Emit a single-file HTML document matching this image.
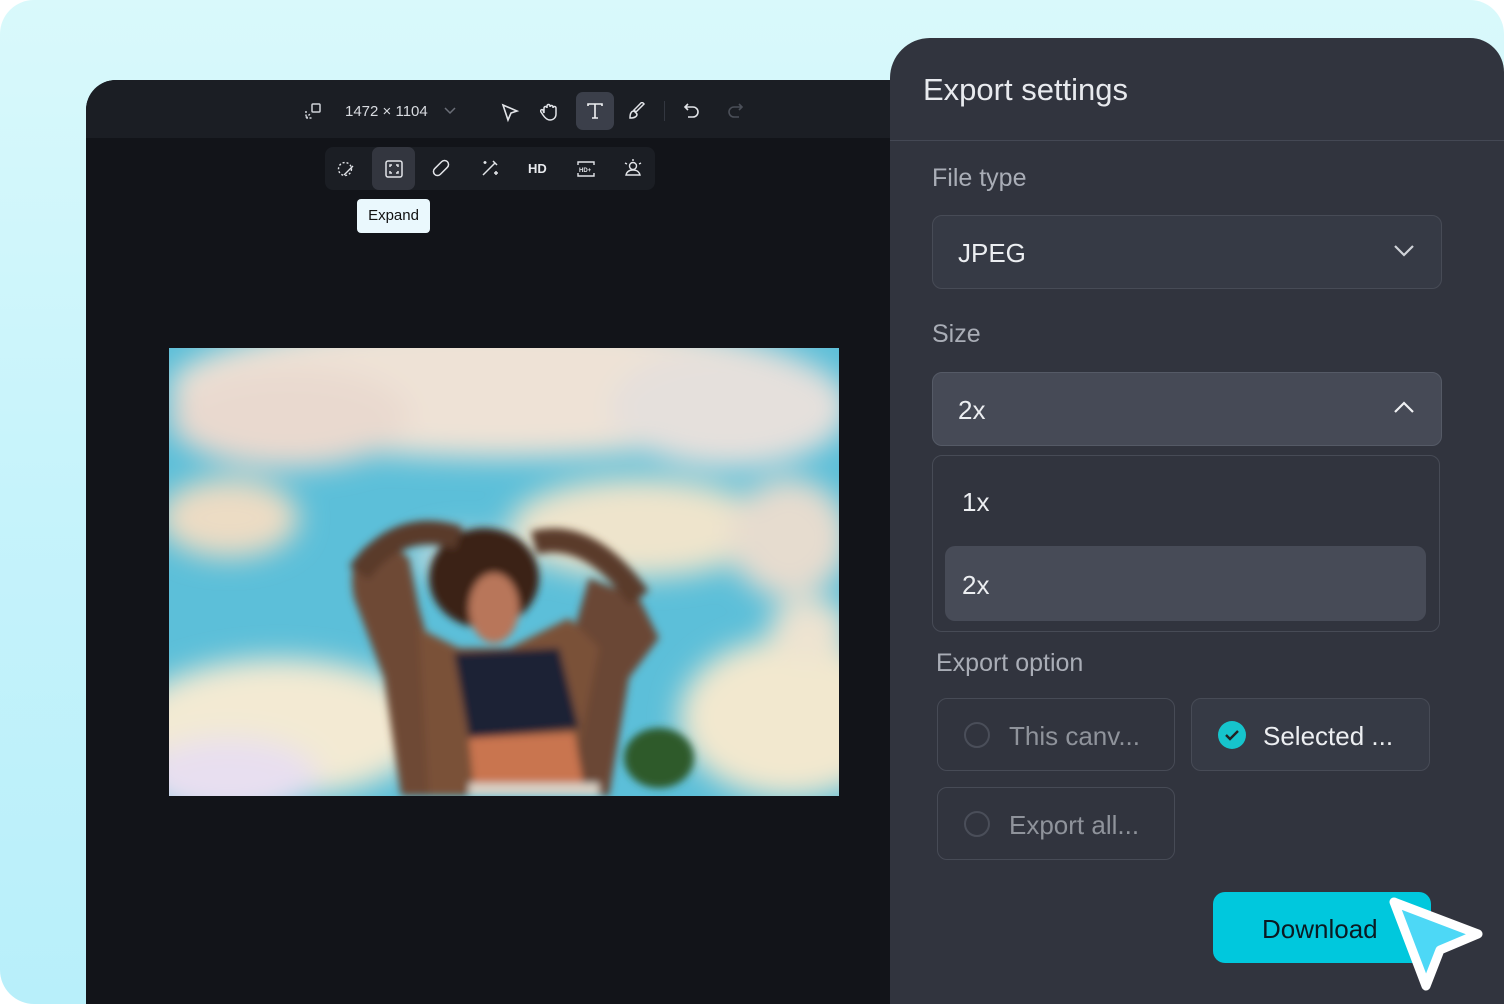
<!DOCTYPE html>
<html><head><meta charset="utf-8"><style>
*{margin:0;padding:0;box-sizing:border-box}
body{width:1504px;height:1004px;background:#fff;font-family:"Liberation Sans",sans-serif;overflow:hidden;position:relative}
.bg{position:absolute;inset:0;border-radius:34px;background:linear-gradient(180deg,#d9f9fb 0%,#c6f3fb 50%,#b8effa 100%)}
.ed{position:absolute;left:86px;top:80px;width:860px;height:924px;background:#121419;border-top-left-radius:30px}
.tb{position:absolute;left:86px;top:80px;width:860px;height:58px;background:#1b1e24;border-top-left-radius:30px}
.t{position:absolute;color:#d8dbe0;font-size:15px}
.sub{position:absolute;left:325px;top:147px;width:330px;height:43px;background:#1b1e24;border-radius:8px}
.act{position:absolute;background:#3b3f4a;border-radius:7px}
.tip{position:absolute;left:357px;top:199px;width:73px;height:34px;background:#eaf8fd;border-radius:4px;color:#111;font-size:15px;text-align:center;line-height:34px}
.img{position:absolute;left:169px;top:348px;width:670px;height:448px;overflow:hidden;background:#5cbfd9}
.pn{position:absolute;left:890px;top:38px;width:614px;height:966px;background:#31343e;border-top-left-radius:40px;border-top-right-radius:34px}
.h{position:absolute;color:#e8eaee;font-size:31px;left:923px;top:72px}
.hr{position:absolute;left:890px;top:140px;width:614px;height:1px;background:#444854}
.lb{position:absolute;color:#a9adb6;font-size:25px}
.box{position:absolute;border:1px solid #474b56;border-radius:10px;background:#363a45}
.v{position:absolute;color:#eceef1;font-size:26px}
.rad{position:absolute;width:26px;height:26px;border-radius:50%;border:2px solid #4a4e59}
</style></head><body>
<div class="bg"></div>
<div class="ed"></div>
<div class="tb"></div>
<svg style="position:absolute;left:305px;top:103px" width="16" height="16" fill="none" stroke="#cfd2d8" stroke-width="1.5"><rect x="7" y="1" width="8" height="8" rx="1"/><path d="M1 8v7h7M1 15l5-5" stroke-dasharray="2 1.5"/></svg>
<div class="t" style="left:345px;top:103px">1472 × 1104</div>
<svg style="position:absolute;left:443px;top:106px" width="14" height="10" fill="none" stroke="#6b6f78" stroke-width="1.5"><path d="M2 2l5 5 5-5"/></svg>
<svg style="position:absolute;left:500px;top:103px" width="20" height="20" fill="none" stroke="#e2e4e8" stroke-width="1.6"><path d="M3 2l14 6-6 2-3 7z"/></svg>
<svg style="position:absolute;left:540px;top:102px" width="18" height="20" fill="none" stroke="#e2e4e8" stroke-width="1.5"><path d="M4 11V6a1.5 1.5 0 013 0V4a1.5 1.5 0 013 0v1a1.5 1.5 0 013 0v1a1.5 1.5 0 013 0v6c0 4-3 6-6 6s-5-2-7-5l-2-3a1.4 1.4 0 012-2z"/></svg>
<div class="act" style="left:576px;top:92px;width:38px;height:38px"></div>
<svg style="position:absolute;left:586px;top:102px" width="18" height="18" fill="none" stroke="#f0f1f3" stroke-width="1.6"><path d="M2 4V2h14v2M9 2v14M6 16h6"/></svg>
<svg style="position:absolute;left:628px;top:102px" width="18" height="18" fill="none" stroke="#e2e4e8" stroke-width="1.5"><path d="M16 2l-8 8-2-2 8-8zM6 9c-3 0-4 3-4 7 4 0 7-1 7-4z"/></svg>
<div style="position:absolute;left:664px;top:101px;width:1px;height:20px;background:#333740"></div>
<svg style="position:absolute;left:683px;top:102px" width="18" height="18" fill="none" stroke="#e2e4e8" stroke-width="1.6"><path d="M5 2L2 5l3 3M2 5h8a5 5 0 010 10H5"/></svg>
<svg style="position:absolute;left:726px;top:102px" width="18" height="18" fill="none" stroke="#4b4f58" stroke-width="1.6"><path d="M13 2l3 3-3 3M16 5H8a5 5 0 000 10h5"/></svg>
<div class="sub"></div>
<div class="act" style="left:372px;top:147px;width:43px;height:43px;background:#33363f"></div>
<svg style="position:absolute;left:337px;top:160px" width="18" height="18" fill="none" stroke="#e2e4e8" stroke-width="1.4"><circle cx="8" cy="9" r="6.5" stroke-dasharray="2 2"/><path d="M16 6l-6 6M7 15l3-3"/></svg>
<svg style="position:absolute;left:384px;top:159px" width="20" height="20" fill="none" stroke="#e2e4e8" stroke-width="1.5"><rect x="2" y="2" width="16" height="16" rx="2"/><path d="M6 8V6h2M12 6h2v2M14 12v2h-2M8 14H6v-2"/></svg>
<svg style="position:absolute;left:431px;top:158px" width="20" height="20" fill="none" stroke="#e2e4e8" stroke-width="1.5"><rect x="1" y="6" width="18" height="8" rx="4" transform="rotate(-45 10 10)"/></svg>
<svg style="position:absolute;left:480px;top:158px" width="20" height="20" fill="none" stroke="#e2e4e8" stroke-width="1.5"><path d="M3 17L15 5M13 3l4 4M5 3v3M3.5 4.5h3M16 13v4M14 15h4"/></svg>
<div class="t" style="left:528px;top:161px;font-size:13px;font-weight:bold;color:#e8eaee">HD</div>
<svg style="position:absolute;left:576px;top:159px" width="20" height="20" fill="none" stroke="#e2e4e8" stroke-width="1.4"><path d="M2 6V3h16v3M2 14v3h16v-3"/><text x="3" y="13" font-size="6" fill="#e2e4e8" stroke="none" font-weight="bold" font-family="Liberation Sans">HD+</text></svg>
<svg style="position:absolute;left:623px;top:158px" width="20" height="20" fill="none" stroke="#e2e4e8" stroke-width="1.4"><circle cx="10" cy="8" r="3.5"/><path d="M3 17c1-4 4-5 7-5s6 1 7 5zM2 5l2 1M18 5l-2 1M10 1v2"/></svg>
<div class="tip">Expand</div>
<div class="img"><svg width="670" height="448">
<defs><filter id="b" x="-30%" y="-30%" width="160%" height="160%"><feGaussianBlur stdDeviation="14"/></filter><filter id="s"><feGaussianBlur stdDeviation="4"/></filter></defs>
<g filter="url(#b)">
<ellipse cx="330" cy="40" rx="330" ry="70" fill="#eee2d6"/>
<ellipse cx="120" cy="70" rx="120" ry="50" fill="#e9d9cf"/>
<ellipse cx="560" cy="60" rx="120" ry="60" fill="#e5e0dc"/>
<ellipse cx="60" cy="170" rx="70" ry="40" fill="#ecdcc4"/>
<ellipse cx="470" cy="180" rx="130" ry="50" fill="#eee4cc"/>
<ellipse cx="620" cy="190" rx="60" ry="60" fill="#e6dccf"/>
<ellipse cx="300" cy="210" rx="60" ry="25" fill="#b9d8dc"/>
<ellipse cx="110" cy="380" rx="150" ry="70" fill="#f3ead3"/>
<ellipse cx="60" cy="430" rx="90" ry="40" fill="#e8dff0"/>
<ellipse cx="620" cy="370" rx="110" ry="80" fill="#f2e8cf"/>
<ellipse cx="640" cy="280" rx="40" ry="30" fill="#ede3d1"/>
</g>
<g filter="url(#s)">
<path d="M185 250 Q175 200 215 190 L240 210 L250 260 L270 330 L262 448 L232 448 L215 330 Z" fill="#6e4a36"/>
<path d="M420 230 L470 250 L490 290 L460 330 L440 448 L400 448 L400 300 Z" fill="#6a4634"/>
<ellipse cx="315" cy="230" rx="55" ry="50" fill="#3a2418"/>
<path d="M250 280 L290 300 L340 300 L400 270 L430 300 L400 448 L260 448 Z" fill="#7a5139"/>
<ellipse cx="325" cy="260" rx="25" ry="35" fill="#b8765a"/>
<path d="M285 305 L390 300 L410 380 L300 390 Z" fill="#1e2436"/>
<path d="M300 390 L405 385 L415 440 L305 440 Z" fill="#c97450"/>
<rect x="300" y="435" width="130" height="13" fill="#d8d0c4"/>
<path d="M190 225 Q230 170 290 190" stroke="#5a3a2a" stroke-width="24" fill="none"/>
<path d="M365 195 Q420 180 470 250" stroke="#5a3a2a" stroke-width="24" fill="none"/>
<ellipse cx="490" cy="410" rx="35" ry="30" fill="#2f5a2a"/>
</g>
</svg></div>
<div class="pn"></div>
<div class="h">Export settings</div>
<div class="hr"></div>
<div class="lb" style="left:932px;top:164px">File type</div>
<div class="box" style="left:932px;top:215px;width:510px;height:74px"></div>
<div class="v" style="left:958px;top:238px">JPEG</div>
<svg style="position:absolute;left:1393px;top:244px" width="22" height="14" fill="none" stroke="#d0d3d8" stroke-width="2.2"><path d="M2 2l9 9 9-9"/></svg>
<div class="lb" style="left:932px;top:320px">Size</div>
<div class="box" style="left:932px;top:372px;width:510px;height:74px;background:#464a56;border-color:#555a66"></div>
<div class="v" style="left:958px;top:395px">2x</div>
<svg style="position:absolute;left:1393px;top:400px" width="22" height="14" fill="none" stroke="#f0f1f3" stroke-width="2.2"><path d="M2 12l9-9 9 9"/></svg>
<div class="box" style="left:932px;top:455px;width:508px;height:177px;background:#31343e"></div>
<div class="v" style="left:962px;top:487px">1x</div>
<div style="position:absolute;left:945px;top:546px;width:481px;height:75px;background:#474b57;border-radius:10px"></div>
<div class="v" style="left:962px;top:570px">2x</div>
<div class="lb" style="left:936px;top:649px">Export option</div>
<div class="box" style="left:937px;top:698px;width:238px;height:73px;background:#31343e"></div>
<div class="rad" style="left:964px;top:722px"></div>
<div class="v" style="left:1009px;top:721px;color:#8f939b">This canv...</div>
<div class="box" style="left:1191px;top:698px;width:239px;height:73px;background:#363a45"></div>
<div style="position:absolute;left:1218px;top:721px;width:28px;height:28px;border-radius:50%;background:#16c4cc"></div>
<svg style="position:absolute;left:1224px;top:728px" width="16" height="14" fill="none" stroke="#222" stroke-width="2.4"><path d="M2 7l4 4 8-8"/></svg>
<div class="v" style="left:1263px;top:721px">Selected ...</div>
<div class="box" style="left:937px;top:787px;width:238px;height:73px;background:#31343e"></div>
<div class="rad" style="left:964px;top:811px"></div>
<div class="v" style="left:1009px;top:810px;color:#8f939b">Export all...</div>
<div style="position:absolute;left:1213px;top:892px;width:218px;height:71px;background:#00c8dd;border-radius:12px"></div>
<div class="v" style="left:1262px;top:914px;color:#0b1a22">Download</div>
<svg style="position:absolute;left:1380px;top:890px" width="115" height="110"><path d="M14 12L98 44L60 60L46 96Z" fill="#4dd8f6" stroke="#fff" stroke-width="9" stroke-linejoin="round"/></svg>
</body></html>
